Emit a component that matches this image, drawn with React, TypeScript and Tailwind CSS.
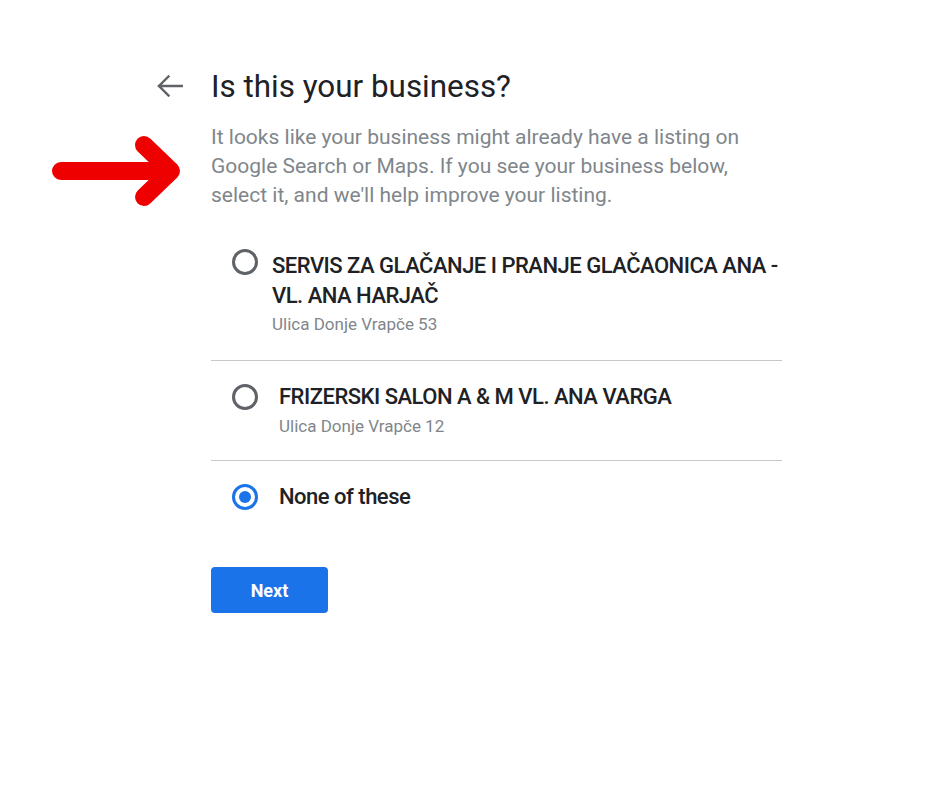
type Option = {
  id: string
  name: string
  address?: string
}

const options: Option[] = [
  {
    id: 'servis',
    name: 'SERVIS ZA GLAČANJE I PRANJE GLAČAONICA ANA - VL. ANA HARJAČ',
    address: 'Ulica Donje Vrapče 53',
  },
  {
    id: 'frizerski',
    name: 'FRIZERSKI SALON A & M VL. ANA VARGA',
    address: 'Ulica Donje Vrapče 12',
  },
  { id: 'none', name: 'None of these' },
]

function Radio({ checked }: { checked: boolean }) {
  if (checked) {
    return (
      <span className="flex size-[26px] shrink-0 items-center justify-center rounded-full border-[3px] border-[#1a73e8]">
        <span className="size-[12px] rounded-full bg-[#1a73e8]" />
      </span>
    )
  }
  return <span className="size-[26px] shrink-0 rounded-full border-[3px] border-[#5f6368]" />
}

function BackArrow() {
  return (
    <svg aria-hidden="true" width="26" height="22" viewBox="0 0 26 22">
      <path
        d="M25 11 H2 M11.5 1.5 L2 11 L11.5 20.5"
        fill="none"
        stroke="#5f6368"
        strokeWidth="2.4"
        strokeLinecap="square"
      />
    </svg>
  )
}

function RedArrow() {
  return (
    <svg
      aria-hidden="true"
      className="absolute left-[40px] top-[125px]"
      width="150"
      height="95"
      viewBox="0 0 150 95"
    >
      <path
        d="M21 46 H128 M104 20 L131 46 L104 72"
        fill="none"
        stroke="#ee0000"
        strokeWidth="18"
        strokeLinecap="round"
        strokeLinejoin="round"
      />
    </svg>
  )
}

export default function App() {
  const selected = 'none'

  return (
    <div className="relative h-[788px] w-full bg-white font-['Roboto',sans-serif]">
      <RedArrow />

      <div className="flex pl-[150px] pt-[69px]">
        <div className="w-[61px] pl-[7px] pt-[6px]">
          <BackArrow />
        </div>

        <div className="w-[571px]">
          <h1 className="text-[31.4px] leading-[36px] text-[#202124]">Is this your business?</h1>
          <p className="mt-[18px] text-[21px] leading-[29px] text-[#80868b]">
            It looks like your business might already have a listing on Google Search or Maps. If you
            see your business below, select it, and we'll help improve your listing.
          </p>

          <div className="mt-[41px]">
            {options.map((option, index) => (
              <div
                key={option.id}
                className={
                  index === 0
                    ? 'border-b border-[#c8c8c8] pb-[26px]'
                    : index === 1
                      ? 'border-b border-[#c8c8c8] pb-[24px] pt-[21px]'
                      : 'pt-[21px]'
                }
              >
                <label className="flex items-start">
                  <span
                    className={
                      index === 0
                        ? 'ml-[21px] flex h-[21px] items-center'
                        : 'ml-[21px] flex h-[30px] items-center'
                    }
                  >
                    <Radio checked={selected === option.id} />
                  </span>
                  <span className={index === 0 ? 'ml-[14px] flex-1' : 'ml-[21px] flex-1'}>
                    <span className="block text-[22px] font-medium leading-[30px] tracking-[-0.5px] text-[#202124]">
                      {option.name}
                    </span>
                    {option.address ? (
                      <span
                        className={
                          index === 0
                            ? 'mt-[3px] block text-[17px] leading-[20px] text-[#80868b]'
                            : 'mt-[4px] block text-[17px] leading-[20px] text-[#80868b]'
                        }
                      >
                        {option.address}
                      </span>
                    ) : null}
                  </span>
                </label>
              </div>
            ))}
          </div>

          <button
            type="button"
            className="mt-[55px] h-[46px] w-[117px] rounded-[4px] bg-[#1a73e8] text-[18px] font-bold text-white"
          >
            Next
          </button>
        </div>
      </div>
    </div>
  )
}
